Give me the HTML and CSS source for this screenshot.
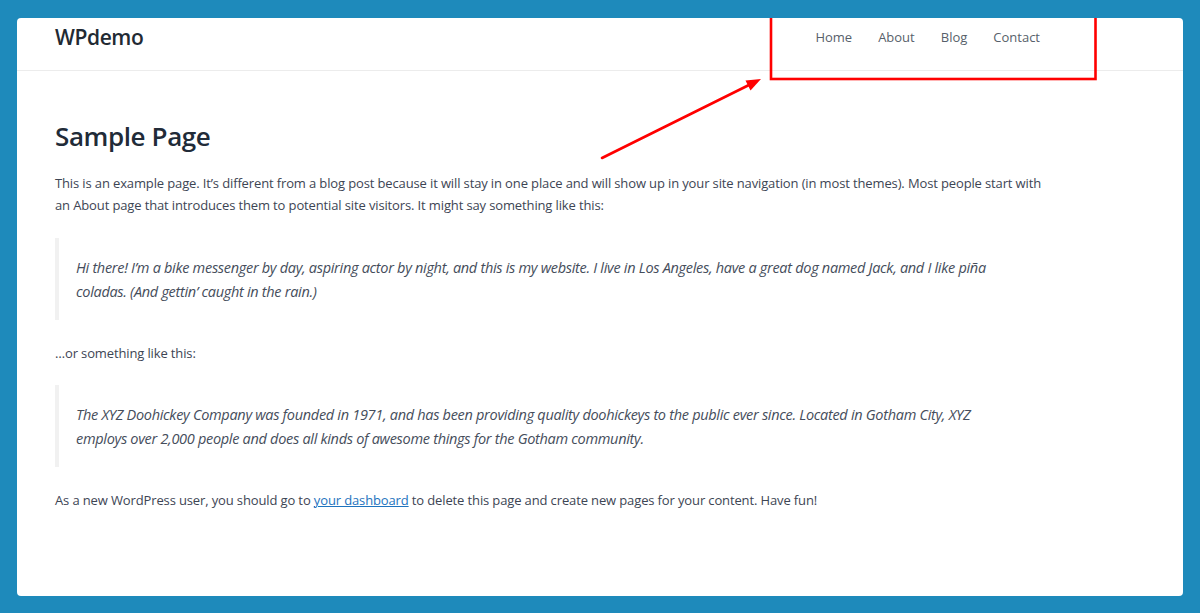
FILE: index.html
```html
<!DOCTYPE html>
<html lang="en">
<head>
<meta charset="utf-8">
<title>Sample Page – WPdemo</title>
<link rel="stylesheet" href="styles.css">
</head>
<body>
<div class="card">
  <header class="site-header">
    <div class="header-inner">
      <div class="brand">WPdemo</div>
      <nav class="menu">
        <a href="#">Home</a>
        <a href="#">About</a>
        <a href="#">Blog</a>
        <a href="#">Contact</a>
      </nav>
    </div>
  </header>
  <main class="content">
    <h1 class="title">Sample Page</h1>
    <p class="text">This is an example page. It’s different from a blog post because it will stay in one place and will show up in your site navigation (in most themes). Most people start with an About page that introduces them to potential site visitors. It might say something like this:</p>
    <blockquote class="quote">Hi there! I’m a bike messenger by day, aspiring actor by night, and this is my website. I live in Los Angeles, have a great dog named Jack, and I like piña coladas. (And gettin’ caught in the rain.)</blockquote>
    <p class="text">…or something like this:</p>
    <blockquote class="quote">The XYZ Doohickey Company was founded in 1971, and has been providing quality doohickeys to the public ever since. Located in Gotham City, XYZ employs over 2,000 people and does all kinds of awesome things for the Gotham community.</blockquote>
    <p class="text">As a new WordPress user, you should go to <a class="link" href="#">your dashboard</a> to delete this page and create new pages for your content. Have fun!</p>
  </main>
  <svg class="annotation" width="1166" height="578" viewBox="0 0 1166 578" aria-hidden="true">
    <rect x="754" y="-10" width="324.5" height="71" fill="none" stroke="#ff0000" stroke-width="2.6"/>
    <line x1="585" y1="140" x2="734" y2="66" stroke="#ff0000" stroke-width="2.6" stroke-linecap="round"/>
    <polygon points="744,61 733.5,72.5 728.5,62.5" fill="#ff0000"/>
  </svg>
</div>
</body>
</html>
```
FILE: styles.css
```css
html, body {
  margin: 0;
  padding: 0;
}
body {
  background: #1e8abb;
  width: 1200px;
  height: 613px;
  overflow: hidden;
  padding-top: 18px;
  box-sizing: border-box;
  font-family: "Open Sans", "Noto Sans", sans-serif;
}
.card {
  position: relative;
  margin: 0 17px;
  height: 578px;
  background: #ffffff;
  border-radius: 4px;
  overflow: hidden;
}
.site-header {
  height: 52px;
  border-bottom: 1px solid #ececec;
}
.header-inner {
  width: 990px;
  margin-left: 38px;
  display: flex;
  justify-content: space-between;
  align-items: flex-start;
}
.brand {
  margin-top: 5px;
  font-size: 21px;
  line-height: 28px;
  font-weight: 600;
  color: #222a33;
  letter-spacing: -0.4px;
}
.menu {
  display: flex;
  gap: 26px;
  margin-top: 9px;
  padding-right: 5px;
}
.menu a {
  font-size: 13px;
  line-height: 20px;
  color: #575f6b;
  text-decoration: none;
}
.content {
  width: 990px;
  margin-left: 38px;
  padding-top: 50px;
}
.title {
  margin: 0 0 19.5px;
  font-size: 26px;
  line-height: 31.2px;
  font-weight: 600;
  color: #212b38;
  letter-spacing: -0.4px;
}
.text {
  margin: 0 0 21.5px;
  font-size: 13px;
  line-height: 22.4px;
  color: #3d4554;
  letter-spacing: -0.13px;
}
.link {
  color: #1e73be;
  text-decoration: underline;
}
.quote {
  margin: 0 0 21.5px;
  border-left: 4px solid #f1f1f1;
  padding: 17.5px 32px 15.5px 17px;
  font-style: italic;
  font-size: 14.5px;
  line-height: 24.5px;
  color: #454d5b;
  letter-spacing: -0.3px;
}
.annotation {
  position: absolute;
  left: 0;
  top: 0;
  pointer-events: none;
}
```
